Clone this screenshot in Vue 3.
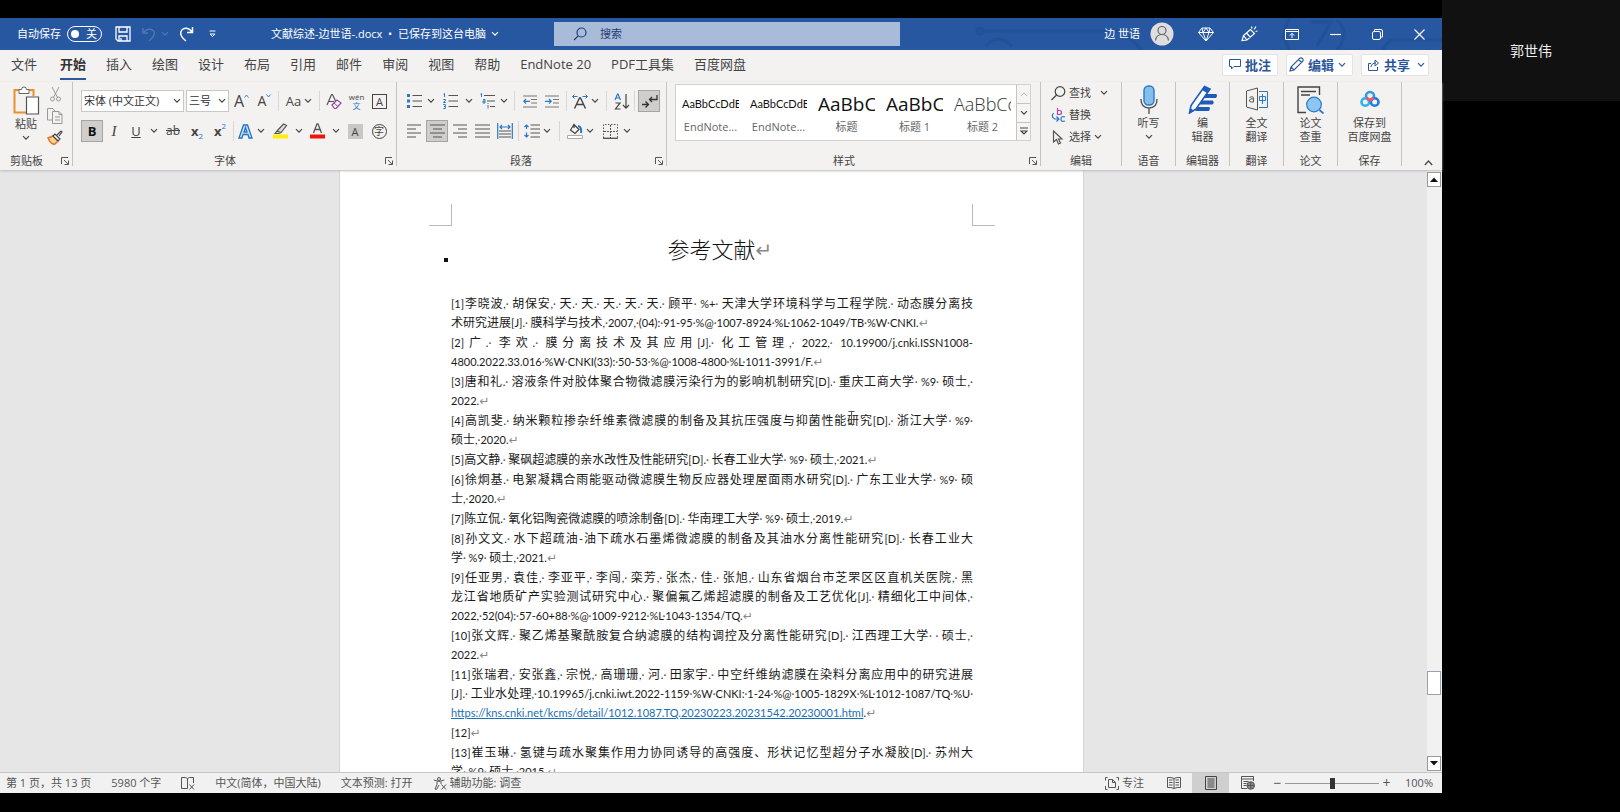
<script setup>
import { h, ref } from 'vue'

const svg = (attrs, paths) => h('svg', { fill: 'none', 'aria-hidden': 'true', ...attrs }, paths)

const Caret = () =>
  svg({ width: 8, height: 6, viewBox: '0 0 8 6', stroke: 'currentColor', 'stroke-width': 1.2 }, [h('path', { d: 'M1 1.2 4 4.2 7 1.2' })])
const Launcher = () =>
  svg({ width: 8, height: 8, viewBox: '0 0 8 8', stroke: '#555', 'stroke-width': 1 }, [h('path', { d: 'M.5 7V.5H7M3 3l4 4M7.5 3.5v4h-4' })])
const Lines = (props) =>
  svg({ width: 15, height: 14, viewBox: '0 0 15 14', stroke: '#555', 'stroke-width': 1.2 }, [h('path', { d: props.d })])
Lines.props = ['d']

const tabs = ['文件', '开始', '插入', '绘图', '设计', '布局', '引用', '邮件', '审阅', '视图', '帮助', 'EndNote 20', 'PDF工具集', '百度网盘']
const activeTab = ref('开始')
const zoom = ref(50)

const gallery = [
  { sample: 'AaBbCcDdE', name: 'EndNote...', kind: 'small' },
  { sample: 'AaBbCcDdE', name: 'EndNote...', kind: 'small' },
  { sample: 'AaBbC', name: '标题', kind: 'large' },
  { sample: 'AaBbC', name: '标题 1', kind: 'large' },
  { sample: 'AaBbCc', name: '标题 2', kind: 'large light' }
]

const rows = [
  ['[1]李晓波,· 胡保安,· 天.· 天.· 天.· 天.· 天.· 顾平· %+· 天津大学环境科学与工程学院.· 动态膜分离技', 1],
  ['术研究进展[J].· 膜科学与技术,·2007,·(04):·91-95·%@·1007-8924·%L·1062-1049/TB·%W·CNKI.↵', 0],
  ['[2]广.· 李欢.· 膜分离技术及其应用[J].· 化工管理,· 2022,· 10.19900/j.cnki.ISSN1008-', 1],
  ['4800.2022.33.016·%W·CNKI(33):·50-53·%@·1008-4800·%L·1011-3991/F.↵', 0],
  ['[3]唐和礼.· 溶液条件对胶体聚合物微滤膜污染行为的影响机制研究[D].· 重庆工商大学· %9· 硕士,·', 1],
  ['2022.↵', 0],
  ['[4]高凯斐.· 纳米颗粒掺杂纤维素微滤膜的制备及其抗压强度与抑菌性能研究[D].· 浙江大学· %9·', 1],
  ['硕士,·2020.↵', 0],
  ['[5]高文静.· 聚砜超滤膜的亲水改性及性能研究[D].· 长春工业大学· %9· 硕士,·2021.↵', 0],
  ['[6]徐炯基.· 电絮凝耦合雨能驱动微滤膜生物反应器处理屋面雨水研究[D].· 广东工业大学· %9· 硕', 1],
  ['士,·2020.↵', 0],
  ['[7]陈立侃.· 氧化铝陶瓷微滤膜的喷涂制备[D].· 华南理工大学· %9· 硕士,·2019.↵', 0],
  ['[8]孙文文.· 水下超疏油-油下疏水石墨烯微滤膜的制备及其油水分离性能研究[D].· 长春工业大', 1],
  ['学· %9· 硕士,·2021.↵', 0],
  ['[9]任亚男,· 袁佳,· 李亚平,· 李闯,· 栾芳,· 张杰,· 佳.· 张旭,· 山东省烟台市芝罘区区直机关医院,· 黑', 1],
  ['龙江省地质矿产实验测试研究中心.· 聚偏氟乙烯超滤膜的制备及工艺优化[J].· 精细化工中间体,·', 1],
  ['2022,·52(04):·57-60+88·%@·1009-9212·%L·1043-1354/TQ.↵', 0],
  ['[10]张文辉.· 聚乙烯基聚酰胺复合纳滤膜的结构调控及分离性能研究[D].· 江西理工大学· · 硕士,·', 1],
  ['2022.↵', 0],
  ['[11]张瑞君,· 安张鑫,· 宗悦,· 高珊珊,· 河.· 田家宇.· 中空纤维纳滤膜在染料分离应用中的研究进展', 1],
  ['[J].· 工业水处理,·10.19965/j.cnki.iwt.2022-1159·%W·CNKI:·1-24·%@·1005-1829X·%L·1012-1087/TQ·%U·', 1],
  ['https://kns.cnki.net/kcms/detail/1012.1087.TQ.20230223.20231542.20230001.html.↵', 0],
  ['[12]↵', 0],
  ['[13]崔玉琳.· 氢键与疏水聚集作用力协同诱导的高强度、形状记忆型超分子水凝胶[D].· 苏州大', 1],
  ['学· %9· 硕士,·2015.↵', 0]
]

const kindOf = (s) => {
  if (s.startsWith('https')) return 'link'
  if (s === '·') return 'dot'
  if (s === '↵') return 'mark'
  return /^[\x21-\x7e]/.test(s) ? 'latin' : 'han'
}
const lines = rows.map(([text, full]) => ({
  full: !!full,
  runs: text.match(/https.*html|·|↵|[\x21-\x7e]+|[^\x21-\x7e·↵]+/g).map((s) => ({ s, kind: kindOf(s) }))
}))
</script>

<template>
  <div class="screen">
    <div class="share">
      <main class="word">
        <header class="titlebar">
          <svg class="circuit" width="470" height="32" viewBox="0 0 470 32" fill="none" stroke="#1f4f94" stroke-width="3" aria-hidden="true">
            <path d="M8 13H150l20 19M14 28q12-14 26 0M318 0a26 26 0 0 0 0 32M365 2q14 14 0 30M345 28l14-24h-20M410 32l8-10h52" />
            <circle cx="8" cy="13" r="3" />
          </svg>
          <label class="autosave">自动保存
            <input type="checkbox" class="sr" /><span class="toggle"><i></i>关</span>
          </label>
          <button class="tb save" aria-label="保存"><svg width="16" height="16" viewBox="0 0 16 16" fill="none" stroke="#fff" stroke-width="1.3"><path d="M1 1h14v14H3l-2-2zM4 1v5h8V1M4 15v-5h8v5M6 15v-3" /></svg></button>
          <button class="tb undo" aria-label="撤消"><svg width="14" height="15" viewBox="0 0 14 15" fill="none" stroke="#4f78b5" stroke-width="1.4"><path d="M1 1v5h5M1.5 5.5C4 2 9 1 11.500 4c2.500 3-1 7-4.500 10" /></svg><Caret /></button>
          <button class="tb redo" aria-label="恢复"><svg width="15" height="16" viewBox="0 0 15 16" fill="none" stroke="#fff" stroke-width="1.500"><path d="M13.500 1v5.500H8M13 6C10 1.500 4.500 1 2.500 4.500 .5 8 3 12 7 15" /></svg></button>
          <button class="tb more" aria-label="自定义"><svg width="7" height="8" viewBox="0 0 7 8" fill="none" stroke="#fff"><path d="M.5 1h6M1 4l2.500 2.500L6 4z" /></svg></button>
          <button class="tb doc-name">文献综述-边世语-.docx&nbsp; •&nbsp; 已保存到这台电脑 <Caret /></button>
          <label class="search">
            <svg width="14" height="14" viewBox="0 0 14 14" fill="none" stroke="#1f3e75" stroke-width="1.2"><circle cx="8.500" cy="5.500" r="4.500" /><path d="M5.200 8.800 1 13" /></svg>
            <input type="search" placeholder="搜索" aria-label="搜索" />
          </label>
          <div class="account">
            <span>边 世语</span>
            <svg class="avatar" width="24" height="24" viewBox="0 0 24 24" fill="none" stroke="#666" stroke-width="1.2"><circle cx="12" cy="12" r="11.500" fill="#dedede" stroke="none" /><circle cx="12" cy="8.500" r="4" /><path d="M5.500 18.500c1-8 12-8 13 0" /></svg>
            <button class="tb" aria-label="高级"><svg width="16" height="15" viewBox="0 0 16 15" fill="none" stroke="#fff"><path d="M4 1h8l3.500 4.500L8 14 .5 5.500zM.5 5.500h15M4 1l1 4.500L8 14l3-8.500L12 1M5 5.500 8 1l3 4.500" /></svg></button>
            <button class="tb" aria-label="新功能"><svg width="17" height="16" viewBox="0 0 17 16" fill="none" stroke="#fff" stroke-width="1.200"><path d="M9.500 3.500 2.500 9.500 1 14.500l5-.5 7.500-6.500zM2.500 9.500 6 14M5.500 7l4 4.500M11 2.500l-.5-2M13 3.500l2-3M14.500 5.500l2-.5" /></svg></button>
            <button class="tb" aria-label="功能区显示选项"><svg width="14" height="11" viewBox="0 0 14 11" fill="none" stroke="#fff"><path d="M.5.5h13v10H.5zM.5 2.500h13M7 9V4.500M4.800 6.500 7 4.300l2.200 2.200" /></svg></button>
            <button class="tb" aria-label="最小化"><svg width="11" height="11" viewBox="0 0 11 11" stroke="#fff" stroke-width="1.2"><path d="M0 5.500h11" /></svg></button>
            <button class="tb" aria-label="还原"><svg width="11" height="11" viewBox="0 0 11 11" fill="none" stroke="#fff"><rect x=".5" y="2.500" width="8" height="8" rx="1.500" /><path d="M2.500 2V.5H9Q10.500.5 10.500 2v6H9" /></svg></button>
            <button class="tb" aria-label="关闭"><svg width="11" height="11" viewBox="0 0 11 11" stroke="#fff" stroke-width="1.100"><path d="m.5.5 10 10M10.500.5l-10 10" /></svg></button>
          </div>
        </header>

        <nav class="tabs">
          <button v-for="t in tabs" :key="t" class="tab" :class="{ active: t === activeTab }" @click="activeTab = t">{{ t }}</button>
          <div class="tab-actions">
            <button class="pill"><svg width="12" height="11" viewBox="0 0 12 11" fill="none" stroke="#2b579a"><path d="M.5.500h11v7H5L2.500 10V7.500h-2z" /></svg>批注</button>
            <button class="pill edit"><svg width="15" height="15" viewBox="0 0 15 15" fill="none" stroke="#2b579a" stroke-width="1.100"><path d="M1 14l1-4L11 1q1.500-.5 2.500.500T14 4L5 13zM2 10l3 3M9.500 2.500l3 3" /></svg>编辑<Caret /></button>
            <button class="pill share-btn"><svg width="12" height="12" viewBox="0 0 12 12" fill="none" stroke="#2b579a"><path d="M3 4.500H.5v7h9V8M3 8c.5-3 2-4 5-4M7 1l3.500 3L7 7z" /></svg>共享<Caret /></button>
          </div>
        </nav>

        <section class="ribbon">
          <div class="group clip">
            <div class="body clip-body">
              <button class="big paste">
                <svg width="27" height="29" viewBox="0 0 27 29" fill="none"><path d="M6 4H1.500v22.500H13M15 4h5.500v6" stroke="#e8912d" stroke-width="2" /><path d="M6 3.500h2.500q0-2.500 2.500-2.500t2.500 2.500H16v4H6z" fill="#fff" stroke="#666" /><path d="M13.500 11h12v17h-12z" fill="#fff" stroke="#555" stroke-width="1.200" /></svg>
                <span>粘贴</span><Caret />
              </button>
              <div class="clip-side">
                <button class="ic" aria-label="剪切"><svg width="11" height="15" viewBox="0 0 11 15" fill="none" stroke="#999"><path d="M2 0l5.500 10.500M9 0 3.500 10.500" /><circle cx="2.500" cy="12" r="2" /><circle cx="8.500" cy="12" r="2" /></svg></button>
                <button class="ic" aria-label="复制"><svg width="16" height="16" viewBox="0 0 16 16" fill="none" stroke="#999"><path d="M5 12H.5V.5H6L8 3M5.500 3.500H12l3 3v9H5.500zM12 3.500v3h3M8 9h5M8 12h5" /></svg></button>
                <button class="ic" aria-label="格式刷"><svg width="16" height="15" viewBox="0 0 16 15" fill="none"><path d="M1 8l5-2 5 5-3 3q-4 1-7-6z" fill="#f6cf9e" stroke="#e0781e" stroke-width="1.500" /><path d="m6 6 2-2 5 5-2 2zM10 5l4-4 1 1-3 4" stroke="#444" stroke-width="1.200" fill="#fff" /></svg></button>
              </div>
            </div>
            <footer><span>剪贴板</span><Launcher /></footer>
          </div>

          <div class="group font">
            <div class="body">
              <div class="r f1">
                <label class="combo fam"><select aria-label="字体"><option>宋体 (中文正文)</option></select><Caret /></label>
                <label class="combo size"><select aria-label="字号"><option>三号</option></select><Caret /></label>
                <button class="ic g" aria-label="增大字号"><span class="t16">A</span><svg class="top" width="5" height="4" viewBox="0 0 5 4" fill="none" stroke="#2b88d8"><path d="M.5 3.500l2-2.500 2 2.500" /></svg></button>
                <button class="ic g" aria-label="减小字号"><span class="t14">A</span><svg class="top" width="5" height="4" viewBox="0 0 5 4" fill="none" stroke="#2b88d8"><path d="M.5.5l2 2.500 2-2.500" /></svg></button>
                <i class="sep"></i>
                <button class="ic" aria-label="更改大小写"><span class="t13">Aa</span><Caret /></button>
                <i class="sep"></i>
                <button class="ic" aria-label="清除格式"><svg width="16" height="17" viewBox="0 0 16 17" fill="none"><path d="M1 12 5.500 1.500h1L10 9M2.500 8.500H8" stroke="#555" stroke-width="1.200" /><path d="m6 12 5-5 4 3-5 5.500H8.500z" fill="#fff" stroke="#8e44ad" stroke-width="1.200" /><path d="m8 10 4 3.500" stroke="#8e44ad" /></svg></button>
                <button class="ic pinyin" aria-label="拼音指南"><small>wén</small><b>文</b></button>
                <button class="ic" aria-label="字符边框"><span class="abox">A</span></button>
              </div>
              <div class="r f2">
                <button class="ic on"><b class="t13 dark">B</b></button>
                <button class="ic"><em class="serif">I</em></button>
                <button class="ic"><u class="t13">U</u></button>
                <Caret />
                <button class="ic"><s class="t12">ab</s></button>
                <button class="ic"><b class="t13">x</b><sub class="blue">2</sub></button>
                <button class="ic"><b class="t13">x</b><sup class="blue">2</sup></button>
                <i class="sep"></i>
                <button class="ic" aria-label="文本效果"><svg width="15" height="15" viewBox="0 0 15 15" fill="none" stroke="#2272c3" stroke-width="1.300"><path d="M1 14 5.500 1h4L14 14h-3l-1-3.500H5L4 14zM6 8h3L7.500 3.500z" fill="#cfe4f7" /></svg></button>
                <Caret />
                <button class="ic" aria-label="突出显示"><svg width="15" height="16" viewBox="0 0 15 16" fill="none"><path d="M0 11.500h15v4H0z" fill="#ffee00" /><path d="M4 8 10.500 1l3 1.500L8 9.500zM4 8l-2 2.500h4l2-1" stroke="#555" stroke-width="1.200" fill="#ddd" /></svg></button>
                <Caret />
                <button class="ic" aria-label="字体颜色"><svg width="15" height="16" viewBox="0 0 15 16" fill="none"><path d="M0 11.500h15v4H0z" fill="#f0140a" /><path d="M3.500 10 7 .8h1L11.500 10M5 6.500h5" stroke="#555" stroke-width="1.300" /></svg></button>
                <Caret />
                <button class="ic"><span class="ashade">A</span></button>
                <button class="ic"><span class="acircle">字</span></button>
              </div>
            </div>
            <footer><span>字体</span><Launcher /></footer>
          </div>

          <div class="group para">
            <div class="body">
              <div class="r p1">
                <button class="ic" aria-label="项目符号"><svg width="15" height="16" viewBox="0 0 15 16" fill="none"><path d="M5.500 2.500H15M5.500 8H15M5.500 13.500H15" stroke="#555" stroke-width="1.200" /><path d="M0 1h3v3H0zM0 6.500h3v3H0zM0 12h3v3H0z" fill="#2b78c8" /></svg></button>
                <Caret />
                <button class="ic" aria-label="编号"><svg width="15" height="16" viewBox="0 0 15 16" fill="none"><path d="M5.500 2.500H15M5.500 8H15M5.500 13.500H15" stroke="#555" stroke-width="1.200" /><path d="M.5 1.200 1.500.5V4M.3 6.500h2v1.500l-2 1.500h2.400M.3 11.500h2v4h-2M1 13.500h1" stroke="#2b78c8" /></svg></button>
                <Caret />
                <button class="ic" aria-label="多级列表"><svg width="15" height="16" viewBox="0 0 15 16" fill="none"><path d="M4 2.500h11M7 8h8M10 13.500h5" stroke="#555" stroke-width="1.200" /><path d="M.5 1.200 1.500.5V4M3 6.500h2v3.500H3V8h2M8 12v3.500M8 10v1" stroke="#2b78c8" /></svg></button>
                <Caret />
                <i class="sep"></i>
                <button class="ic" aria-label="减少缩进"><svg width="14" height="13" viewBox="0 0 14 13" fill="none" stroke-width="1.200"><path d="M0 1h14M8 4.500h6M8 8h6M0 12h14" stroke="#777" /><path d="M7 6.300H1M3 4 .8 6.300 3 8.600" stroke="#2b78c8" /></svg></button>
                <button class="ic" aria-label="增加缩进"><svg width="14" height="13" viewBox="0 0 14 13" fill="none" stroke-width="1.200"><path d="M0 1h14M8 4.500h6M8 8h6M0 12h14" stroke="#777" /><path d="M0 6.300h6M4 4l2.200 2.300L4 8.600" stroke="#2b78c8" /></svg></button>
                <i class="sep"></i>
                <button class="ic" aria-label="中文版式"><svg width="16" height="15" viewBox="0 0 16 15" fill="none"><path d="M2.500 14.500 7.500 4h1l5 10.500M4.500 10.500h7" stroke="#444" stroke-width="1.400" /><path d="M.5 2.500h5M2.500.5l-2 2 2 2M15.500 2.500h-5M13.500.5l2 2-2 2" stroke="#2b78c8" /></svg></button>
                <Caret />
                <i class="sep"></i>
                <button class="ic" aria-label="排序"><svg width="16" height="17" viewBox="0 0 16 17" fill="none" stroke-width="1.200"><path d="M1 7 3.500 1h.5l2.500 6M2 5h3.500" stroke="#2b78c8" /><path d="M1.500 10h4.500l-4.500 6h5" stroke="#444" /><path d="M12 1v14M9 12l3 3.200 3-3.200" stroke="#444" /></svg></button>
                <i class="sep"></i>
                <button class="ic on" aria-label="显示编辑标记"><svg width="17" height="15" viewBox="0 0 17 15" fill="none" stroke="#333" stroke-width="1.300"><path d="M16 1v4.500H8.500M11 3 8.500 5.500 11 8M1 10.500h6M4.500 7.500l3 3-3 3" /></svg></button>
              </div>
              <div class="r p2">
                <button class="ic" aria-label="左对齐"><Lines d="M0 1h14M0 5h9M0 9h14M0 13h9" /></button>
                <button class="ic on" aria-label="居中"><Lines d="M0 1h15M3 5h9M0 9h15M3 13h9" /></button>
                <button class="ic" aria-label="右对齐"><Lines d="M1 1h14M6 5h9M1 9h14M6 13h9" /></button>
                <button class="ic" aria-label="两端对齐"><Lines d="M0 1h15M0 5h15M0 9h15M0 13h15" /></button>
                <button class="ic" aria-label="分散对齐"><svg width="16" height="16" viewBox="0 0 16 16" fill="none"><path d="M.7 0v16M15.300 0v16M3 4h10M5 2 3 4l2 2M11 2l2 2-2 2" stroke="#2b78c8" stroke-width="1.200" /><path d="M2 8h12M2 11h12M2 14h12" stroke="#555" /></svg></button>
                <i class="sep"></i>
                <button class="ic" aria-label="行距"><svg width="16" height="14" viewBox="0 0 16 14" fill="none"><path d="M6.500 1H16M6.500 5H16M6.500 9H16M6.500 13H16" stroke="#555" stroke-width="1.200" /><path d="M2.500 1v4M.5 3l2-2 2 2M2.500 8.500V13M.5 11l2 2 2-2" stroke="#2b78c8" stroke-width="1.200" /></svg></button>
                <Caret />
                <i class="sep"></i>
                <button class="ic" aria-label="底纹"><svg width="16" height="16" viewBox="0 0 16 16" fill="none"><path d="M.5 12.500h15v3H.5z" fill="#fff" stroke="#aaa" /><path d="m7 1.500 5 5L8 10.500 3.500 7zM7 1.500V5" stroke="#444" stroke-width="1.200" /><path d="M11 3q4 1 3 7" stroke="#2b78c8" stroke-width="2" /></svg></button>
                <Caret />
                <button class="ic" aria-label="边框"><svg width="15" height="15" viewBox="0 0 15 15" fill="none" stroke="#555"><path d="M.5 14V.5h14V14" stroke-dasharray="1.500 1.500" /><path d="M7.500 1v13M1 7.500h13" stroke-dasharray="2 1" /><path d="M0 14.300h15" stroke-width="1.400" /></svg></button>
                <Caret />
              </div>
            </div>
            <footer><span>段落</span><Launcher /></footer>
          </div>

          <div class="group styles">
            <div class="gallery">
              <div class="cards">
                <button v-for="(g, i) in gallery" :key="i" class="card" :class="g.kind"><span class="sample">{{ g.sample }}</span><span class="cap">{{ g.name }}</span></button>
              </div>
              <div class="scroller">
                <button aria-label="上一行" class="dim"><svg width="8" height="5" viewBox="0 0 8 5" fill="none" stroke="currentColor"><path d="M1 4l3-3 3 3" /></svg></button>
                <button aria-label="下一行"><Caret /></button>
                <button aria-label="其他"><svg width="8" height="9" viewBox="0 0 8 9" fill="none" stroke="currentColor" stroke-width="1.200"><path d="M0 1h8M1 4l3 3 3-3z" /></svg></button>
              </div>
            </div>
            <footer><span>样式</span><Launcher /></footer>
          </div>

          <div class="group editing">
            <div class="finds">
              <button><svg width="15" height="15" viewBox="0 0 15 15" fill="none" stroke="#444" stroke-width="1.200"><circle cx="9" cy="5.500" r="4.800" /><path d="M5.500 9 .5 14" /></svg>查找<Caret class="far" /></button>
              <button><svg width="15" height="15" viewBox="0 0 15 15" fill="none" stroke-width="1.200"><path d="M6.500 0v6.500h2q2 0 2-2t-2-2h-2" stroke="#b146a8" /><path d="M14 9q-4-1.500-4 2t4 2" stroke="#2b78c8" /><path d="M2.500 5q-3 4 1.500 6h3.500M5.500 8.500 8 11l-2.500 2.500" stroke="#2b78c8" /></svg>替换</button>
              <button><svg width="15" height="15" viewBox="0 0 15 15" fill="none" stroke="#555" stroke-width="1.200"><path d="M2.500 1v11l3-2.500 2 4.500 2-1L7.500 9H11z" /></svg>选择<Caret /></button>
            </div>
            <footer><span>编辑</span></footer>
          </div>
          <div class="group narrow">
            <button class="big"><svg width="18" height="29" viewBox="0 0 18 29" fill="none" stroke-width="1.400"><rect x="4" y="1" width="10" height="19" rx="4.500" fill="#83beec" stroke="#2b78c8" /><path d="M1 14q0 9 8 9t8-9M9 23v6" stroke="#555" /></svg><span>听写</span><Caret /></button>
            <footer><span>语音</span></footer>
          </div>
          <div class="group narrow">
            <button class="big"><svg width="30" height="29" viewBox="0 0 30 29" fill="none"><path d="M17 9h11.500q1.500 2-.5 4H14zM14 15.500h11q1.500 2-.5 4H11zM10 22h11.500q1 2-.5 4H7z" fill="#1f5bb8" /><path d="M16.500 1.500 22 4 8 24l-6.500 4L3 20.500z" fill="#fff" stroke="#1f5bb8" stroke-width="1.600" /><path d="M16.500 1 22 4l-3 4-5-3zM1 28.500 2.500 23 6 26z" fill="#1f5bb8" /></svg><span>编<br />辑器</span></button>
            <footer><span>编辑器</span></footer>
          </div>
          <div class="group narrow">
            <button class="big"><svg width="22" height="29" viewBox="0 0 22 29" fill="none"><path d="M11.500 3v22L.5 22V6z" stroke="#555" /><path d="M13 6.500h8.500v16H13" stroke="#2b78c8" /><path d="M3.500 12.500q4-2 4 1V17h-2q-2.500 0-2-2t4-1" stroke="#555" /><path d="M13.500 11.500h6v4h-6zM16.500 9v10" stroke="#2b78c8" /></svg><span>全文<br />翻译</span></button>
            <footer><span>翻译</span></footer>
          </div>
          <div class="group narrow">
            <button class="big"><svg width="27" height="29" viewBox="0 0 27 29" fill="none"><path d="M9 27.500H1V2h21.500v8" stroke="#444" stroke-width="1.400" /><path d="M4 6.500h15M4 10h9" stroke="#444" stroke-width="1.600" /><circle cx="17" cy="19.500" r="7.300" fill="#8cc6f2" stroke="#2b78c8" stroke-width="1.200" /><path d="m22.500 25 4 3.500" stroke="#2b78c8" stroke-width="1.800" /></svg><span>论文<br />查重</span></button>
            <footer><span>论文</span></footer>
          </div>
          <div class="group disk">
            <button class="big"><svg width="20" height="29" viewBox="0 0 20 29" fill="none" stroke-width="2.600"><circle cx="10" cy="11" r="4" stroke="#2f9be8" /><circle cx="5.300" cy="17" r="3.800" stroke="#28b4ee" /><circle cx="14.700" cy="17" r="3.800" stroke="#1f7be0" /><path d="M6.500 12.500 10 15.500l3.500-3" stroke="#f0566a" /></svg><span>保存到<br />百度网盘</span></button>
            <footer><span>保存</span></footer>
          </div>
          <button class="collapse" aria-label="折叠功能区"><svg width="9" height="6" viewBox="0 0 9 6" fill="none" stroke="#444" stroke-width="1.200"><path d="m.8 5 3.700-4 3.700 4" /></svg></button>
        </section>

        <section class="canvas">
          <div class="desk">
            <article class="page">
              <div class="corners"><i></i><i></i></div>
              <h1>参考文献<span class="h-mark">↵</span></h1>
              <div class="refs">
                <p v-for="(l, i) in lines" :key="i" :class="{ full: l.full }"><template v-for="(r, k) in l.runs" :key="k"><a v-if="r.kind === 'link'" href="#" class="latin">{{ r.s }}</a><span v-else :class="r.kind">{{ r.s }}</span></template></p>
              </div>
              <svg class="ibeam" width="7" height="14" viewBox="0 0 7 14" fill="none" stroke="#555" aria-hidden="true"><path d="M.5.5h6M3.500.5v13M.5 13.500h6" /></svg>
            </article>
          </div>
          <div class="vbar">
            <button aria-label="向上滚动"><svg width="8" height="5" viewBox="0 0 8 5"><path d="M0 5l4-4.500L8 5z" fill="#111" /></svg></button>
            <div class="track"><div class="thumb"></div></div>
            <button aria-label="向下滚动"><svg width="8" height="5" viewBox="0 0 8 5"><path d="M0 0l4 4.500L8 0z" fill="#111" /></svg></button>
          </div>
        </section>

        <footer class="status">
          <div class="st-left">
            <span>第 1 页，共 13 页</span>
            <span>5980 个字</span>
            <svg width="14" height="13" viewBox="0 0 14 13" fill="none" stroke="#555"><path d="M6.500 11.500h-6v-11h4l2 1v10M6.500 1.500l2-1h4V6M8.500 7.500l4.500 5M13 7.500l-4.500 5" /></svg>
            <span>中文(简体，中国大陆)</span>
            <span>文本预测: 打开</span>
            <span class="a11y"><svg width="14" height="13" viewBox="0 0 14 13" fill="none" stroke="#555"><circle cx="6" cy="2" r="1.500" /><path d="M.8 3q5 3 10.500 0M4 4.500v3L2 12l1.500.5L6 8M8 4.500V7M8.500 7.500l4.500 5M13 7.500l-4.500 5" /></svg>辅助功能: 调查</span>
          </div>
          <div class="st-right">
            <button class="focus"><svg width="14" height="13" viewBox="0 0 14 13" fill="none" stroke="#555"><path d="M2.500.5h-2v3M.5 9v3.500h2M11.500.5h2v3M13.500 9v3.500h-2M3.500 2.500h4l3 3v5h-7zM7.500 2.500v3h3" /></svg>专注</button>
            <button class="view" aria-label="阅读视图"><svg width="14" height="12" viewBox="0 0 14 12" fill="none" stroke="#555"><path d="M7 1.500Q4 0 .5.500v10q3.500-.5 6.500 1 3-1.500 6.500-1V.5Q10 0 7 1.500zv10M2 3h3.500M2 5.500h3.500M2 8h3.500M8.500 3H12M8.500 5.500H12M8.500 8H12" /></svg></button>
            <button class="view cur" aria-label="页面视图"><svg width="12" height="14" viewBox="0 0 12 14" fill="none" stroke="#444"><path d="M.5.5h11v13H.5zM2.500 3h7M2.500 5h7M2.500 7h7M2.500 9h7M2.500 11h7" /></svg></button>
            <button class="view" aria-label="Web 版式"><svg width="14" height="14" viewBox="0 0 14 14" fill="none" stroke="#555"><path d="M6 12.500H.5V.5h12V5M.5 3h12M2.500 5.500h5M2.500 7.500h3M2.500 9.500h3" /><circle cx="9.700" cy="9.500" r="3.800" fill="#888" /><path d="M9.700 6v7M6.500 9.500H13" /></svg></button>
            <button class="zb minus" aria-label="缩小">−</button>
            <input v-model="zoom" class="slider" type="range" min="0" max="100" aria-label="缩放" />
            <button class="zb" aria-label="放大">+</button>
            <span class="pct">100%</span>
          </div>
        </footer>
      </main>
    </div>
    <aside class="people"><div class="tile">郭世伟</div></aside>
  </div>
</template>

<style>
body { background: #000; }
</style>

<style scoped>
* { box-sizing: border-box; }
.screen { display: flex; height: 100vh; background: #000; overflow: hidden; font: 11px/14px "Open Sans", "Noto Sans CJK SC", sans-serif; color: #444; }
.share { flex: 1; min-width: 0; padding: 18px 0 19px; display: flex; }
.word { flex: 1; min-width: 0; display: flex; flex-direction: column; background: #f3f2f1; }
.people { width: 178px; flex: none; }
.tile { height: 101px; display: grid; place-items: center; background: #111; color: #eee; font-size: 14px; }
button { font: inherit; color: inherit; background: none; border: 0; padding: 0; margin: 0; white-space: nowrap; }
svg { display: block; flex: none; }
i { font-style: normal; }
.sr { position: absolute; opacity: 0; width: 1px; height: 1px; }

.titlebar { position: relative; height: 32px; flex: none; display: flex; align-items: center; background: #2657a0; color: #fff; padding-left: 17px; }
.titlebar > * { position: relative; }
.titlebar > .circuit { position: absolute; right: 0; top: 0; opacity: .7; }
.autosave { display: flex; align-items: center; gap: 6px; }
.toggle { display: flex; align-items: center; justify-content: space-between; width: 35px; height: 16px; border: 1px solid #fff; border-radius: 8px; padding: 0 4px 0 3px; }
.toggle i { width: 8px; height: 8px; border-radius: 50%; background: #fff; }
.tb { display: flex; align-items: center; }
.save { margin-left: 13px; }
.undo { margin-left: 11px; gap: 5px; color: #4f78b5; }
.redo { margin-left: 10px; }
.more { margin-left: 15px; }
.doc-name { margin-left: 55px; width: 283px; gap: 5px; }
.search { width: 346px; flex: 0 1 346px; height: 24px; background: #a8bcda; display: flex; align-items: center; gap: 13px; padding-left: 19px; }
.search input { flex: 1; min-width: 0; border: 0; background: none; outline: 0; font: inherit; padding: 0; }
.search input::placeholder { color: #1f3e75; opacity: 1; }
.account { margin-left: auto; display: flex; align-items: center; padding-right: 17px; }
.account .avatar { margin: 0 24px 0 10px; }
.account .tb + .tb { margin-left: 27px; }
.account .tb:nth-of-type(n + 4) { margin-left: 31px; }

.tabs { height: 32px; flex: none; display: flex; align-items: center; padding-left: 11px; gap: 20px; }
.tab { height: 28px; padding: 0 0 2px; font-size: 13px; line-height: 22px; border-bottom: 2px solid transparent; }
.tab:first-child { margin-right: 3px; }
.tab.active { font-weight: 700; color: #333; border-color: #2b579a; }
.tab-actions { margin-left: auto; padding: 0 13px 3px 0; display: flex; gap: 8px; }
.pill { display: flex; align-items: center; gap: 4px; height: 22px; padding: 0 6px; background: #fff; border: 1px solid #e4e3e2; border-radius: 2px; color: #2b579a; font-weight: 700; font-size: 13px; }
.pill.edit { padding: 0 6px 0 2px; }
.pill.share-btn { padding: 0 3px 0 6px; }
.share-btn svg:last-child { margin-left: 3px; }

.ribbon { height: 88px; flex: none; display: flex; position: relative; z-index: 1; box-shadow: 0 1px 2px #bbb; padding-bottom: 4px; }
.group { flex: none; display: flex; flex-direction: column; justify-content: space-between; border-right: 1px solid #c4c3c2; }
.group footer { display: flex; align-items: center; gap: 8px; height: 14px; padding-right: 3px; margin-bottom: -2px; }
.group footer span { flex: 1; text-align: center; }
.body { padding: 8px 0 0; display: flex; flex-direction: column; gap: 8px; }
.r { display: grid; grid-auto-rows: 22px; align-items: center; justify-items: center; justify-content: start; }
.clip { width: 73px; }
.clip-body { flex-direction: row; padding: 0 0 0 12px; gap: 7px; }
.clip-side { display: flex; flex-direction: column; align-items: center; justify-content: space-between; height: 58px; margin-top: 5px; width: 16px; }
.big { display: flex; flex-direction: column; align-items: center; padding-top: 3px; width: 100%; }
.big span { line-height: 14px; margin: 2px 0 4px; text-align: center; }
.paste { width: 28px; padding-top: 4px; }
.font { width: 324px; padding-left: 8px; }
.font footer, .para footer { margin-left: -8px; }
.para { width: 270px; padding-left: 6px; }
.f1 { grid-template-columns: 105px 44px 23px 23px 5px 36px 5px 23px 23px 23px; }
.f2 { grid-template-columns: 22px 22px 22px 14px 24px 24px 22px 5px 19px 12px 26px 12px 25px 12px 26px 22px; }
.p1 { grid-template-columns: 22px 12px 26px 12px 24px 10px 10px 22px 22px 6px 22px 8px 14px 18px 7px 22px; }
.p2 { grid-template-columns: 23px 22px 23px 22px 23px 4px 23px 8px 16px 15px 16px 24px 10px; }
.ic { display: flex; align-items: center; justify-content: center; gap: 3px; }
.on { width: 22px; height: 22px; background: #cfcecd; border: 1px solid #a5a4a3; }
.sep { width: 1px; height: 20px; background: #d8d7d6; }
.combo { position: relative; justify-self: start; display: block; height: 22px; background: #fff; border: 1px solid #c8c8c8; }
.fam { width: 103px; }
.size { width: 43px; }
.combo select { appearance: none; width: 100%; height: 100%; border: 0; background: none; padding: 0 2px; font: inherit; color: #333; }
.combo svg { position: absolute; right: 2px; top: 7px; pointer-events: none; }
.t16 { font-size: 16px; }
.t14 { font-size: 14px; }
.t13 { font-size: 13px; }
.t12 { font-size: 12px; }
.g { gap: 0; }
.top { align-self: flex-start; }
.dark { color: #111; }
.serif { font: italic 15px/16px "Liberation Serif", serif; }
.blue { color: #2b78c8; font-size: 8px; line-height: 8px; }
.ic:has(.blue) { gap: 0; height: 18px; }
sub.blue { align-self: flex-end; }
sup.blue { align-self: flex-start; }
.pinyin { flex-direction: column; gap: 0; }
.pinyin small { font-size: 8px; line-height: 8px; }
.pinyin b { font-size: 8px; line-height: 9px; color: #2b78c8; font-weight: 400; }
.abox, .ashade, .acircle { width: 15px; height: 15px; display: grid; place-items: center; line-height: 13px; }
.abox { border: 1px solid #444; }
.ashade { background: #c8c7c6; }
.acircle { border: 1px solid #444; border-radius: 50%; font-size: 10px; }

.styles { flex: 1; min-width: 0; }
.gallery { margin: 2px 9px 0 8px; display: flex; height: 57px; background: #fff; border: 1px solid #d2d1d0; }
.cards { flex: 1; min-width: 0; display: flex; overflow: hidden; }
.card { flex: 1 1 68px; min-width: 0; padding: 7px 5px 0 6px; display: flex; flex-direction: column; align-items: center; }
.sample { width: 100%; overflow: hidden; height: 24px; line-height: 24px; text-align: left; font-family: Lato, sans-serif; font-size: 11px; color: #111; }
.large .sample { font-family: "Open Sans", sans-serif; font-size: 19px; font-weight: 400; }
.light .sample { font-weight: 300; color: #333; font-size: 18px; }
.cap { font-size: 11px; line-height: 18px; margin-top: 2px; color: #666; }
.scroller { width: 14px; display: grid; grid-template-rows: repeat(3, 1fr); border-left: 1px solid #c4c3c2; }
.scroller button { display: grid; place-items: center; background: #f6f5f4; }
.scroller button + button { border-top: 1px solid #c4c3c2; }
.scroller .dim { color: #bbb; }

.editing { width: 81px; }
.finds { display: flex; flex-direction: column; align-items: flex-start; padding: 0 0 0 10px; }
.finds button { display: flex; align-items: center; height: 22px; gap: 3px; }
.finds .far { margin-left: 6px; }
.narrow { width: 54px; flex: 0 0 auto; }
.narrow footer, .disk footer, .editing footer { padding: 0; }
.disk { width: 64px; }
.collapse { flex: 1 0 40px; max-width: 40px; display: flex; align-items: flex-end; justify-content: flex-end; padding: 0 9px 0 0; }

.canvas { flex: 1; min-height: 0; display: flex; background: #e6e6e6; }
.desk { flex: 1; min-width: 0; overflow: hidden; display: flex; justify-content: center; }
.page { position: relative; width: 745px; height: 1000px; flex: none; background: #fff; border: solid #d4d4d4; border-width: 0 1px; margin-right: 4px; color: #1a1a1a; }
.corners { display: flex; justify-content: space-between; padding: 34px 88px 0 89px; }
.corners i { width: 23px; height: 22px; border-bottom: 1px solid #bbb; }
.corners i:first-child { border-right: 1px solid #bbb; }
.corners i:last-child { border-left: 1px solid #bbb; }
h1 { position: relative; margin: 6px 111px 0; height: 61px; font: 300 22px/32px "Noto Sans CJK SC", sans-serif; text-align: center; color: #111; }
h1::before { content: ""; position: absolute; left: -7px; top: 26px; width: 4px; height: 4px; background: #111; }
.h-mark { position: absolute; font: 20px/36px "DejaVu Sans", sans-serif; color: #888; }
.refs { margin: 0 111px; height: 488px; display: grid; grid-auto-rows: 1fr; font: 12px/19px "Noto Sans CJK SC", sans-serif; }
.refs p { margin: 0; white-space: nowrap; }
.refs p.full { text-align: justify; text-align-last: justify; white-space: normal; margin-right: -1px; height: 19px; }
.latin { font-family: Lato, sans-serif; font-size: 11px; }
a.latin { color: #1a6fb5; }
.dot { font-family: Lato, sans-serif; font-size: 11px; color: #555; }
.mark { font: 12px/12px "DejaVu Sans", sans-serif; color: #888; }
.ibeam { position: absolute; left: 508px; top: 241px; }
.vbar { width: 15px; flex: none; display: flex; flex-direction: column; background: #f1f1f1; padding: 2px 1px 1px 0; }
.vbar button { height: 15px; display: grid; place-items: center; background: #fff; border: 1px solid #999; }
.track { flex: 1; display: flex; flex-direction: column; justify-content: flex-end; padding-bottom: 61px; }
.thumb { height: 24px; background: #fff; border: 1px solid #9aa3ad; }

.status { height: 21px; flex: none; display: flex; justify-content: space-between; align-items: center; border-top: 1px solid #c6c6c6; background: #f1f1f1; padding: 0 9px 0 6px; color: #555; white-space: nowrap; }
.st-left, .st-right { display: flex; align-items: center; height: 100%; }
.st-left { gap: 20px; }
.a11y, .focus { display: flex; align-items: center; gap: 3px; }
.focus { margin-right: 11px; }
.view { width: 37px; height: 20px; display: grid; place-items: center; }
.cur { background: #cfcfcf; }
.zb { width: 15px; font-size: 14px; line-height: 14px; }
.minus { margin-left: 4px; }
.slider { appearance: none; width: 94px; height: 12px; margin: 0; background: linear-gradient(#999, #999) center / 100% 1px no-repeat; }
.slider::-webkit-slider-thumb { appearance: none; width: 5px; height: 11px; background: #333; }
.pct { margin-left: 9px; width: 30px; text-align: right; }
</style>
